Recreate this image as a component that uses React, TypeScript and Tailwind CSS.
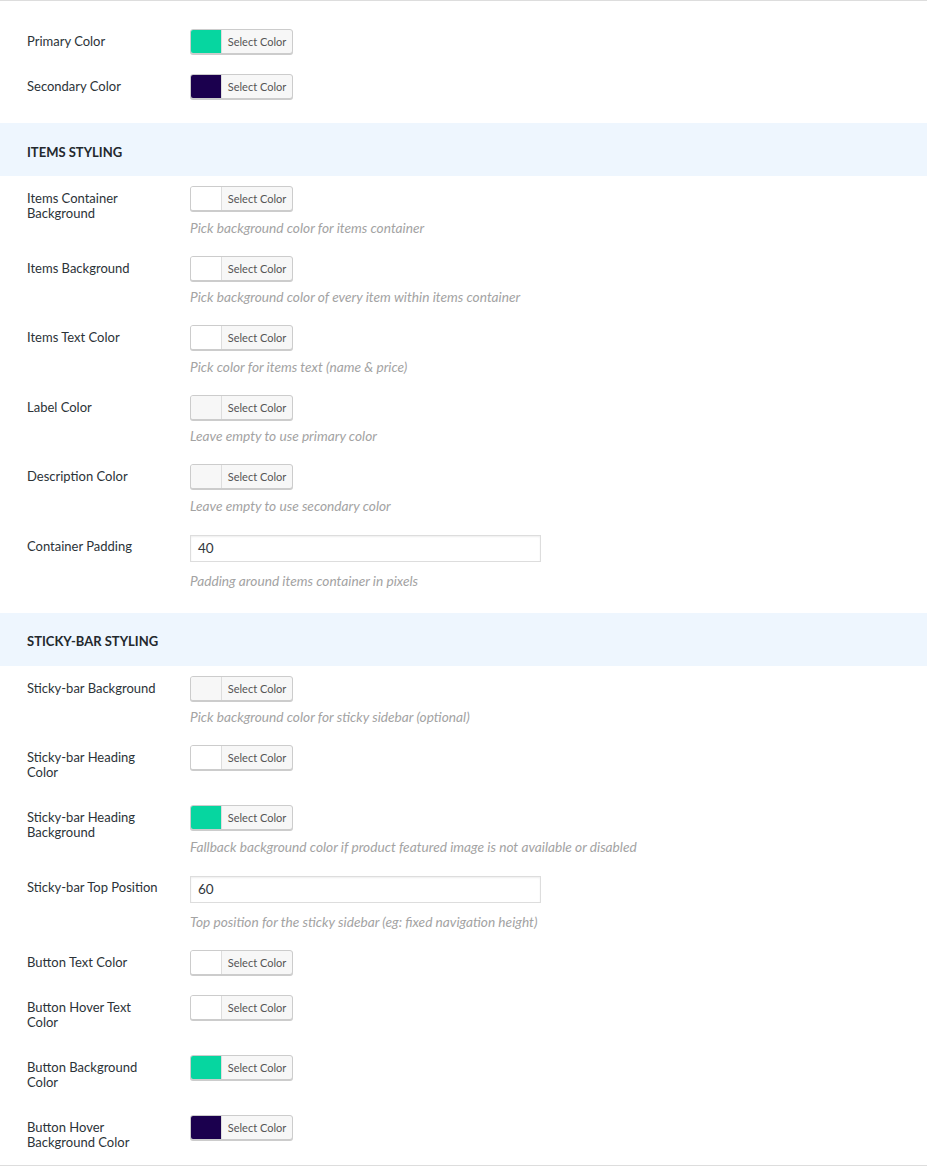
import React from "react";

type Row =
  | { kind: "color"; label: string[]; color: string; desc?: string }
  | { kind: "input"; label: string[]; value: string; desc?: string };

const EMPTY = "#f7f7f7";

const general: Row[] = [
  { kind: "color", label: ["Primary Color"], color: "#06d6a0" },
  { kind: "color", label: ["Secondary Color"], color: "#1b004e" },
];

const items: Row[] = [
  { kind: "color", label: ["Items Container", "Background"], color: "#ffffff", desc: "Pick background color for items container" },
  { kind: "color", label: ["Items Background"], color: "#ffffff", desc: "Pick background color of every item within items container" },
  { kind: "color", label: ["Items Text Color"], color: "#ffffff", desc: "Pick color for items text (name & price)" },
  { kind: "color", label: ["Label Color"], color: EMPTY, desc: "Leave empty to use primary color" },
  { kind: "color", label: ["Description Color"], color: EMPTY, desc: "Leave empty to use secondary color" },
  { kind: "input", label: ["Container Padding"], value: "40", desc: "Padding around items container in pixels" },
];

const sticky: Row[] = [
  { kind: "color", label: ["Sticky-bar Background"], color: EMPTY, desc: "Pick background color for sticky sidebar (optional)" },
  { kind: "color", label: ["Sticky-bar Heading", "Color"], color: "#ffffff" },
  { kind: "color", label: ["Sticky-bar Heading", "Background"], color: "#06d6a0", desc: "Fallback background color if product featured image is not available or disabled" },
  { kind: "input", label: ["Sticky-bar Top Position"], value: "60", desc: "Top position for the sticky sidebar (eg: fixed navigation height)" },
  { kind: "color", label: ["Button Text Color"], color: "#ffffff" },
  { kind: "color", label: ["Button Hover Text", "Color"], color: "#ffffff" },
  { kind: "color", label: ["Button Background", "Color"], color: "#06d6a0" },
  { kind: "color", label: ["Button Hover", "Background Color"], color: "#1b004e" },
];

function ColorButton({ color }: { color: string }) {
  return (
    <div className="flex h-[25px] w-[103px] overflow-hidden rounded-[3px] border border-[#cccccc] bg-[#f7f7f7] shadow-[0_1px_0_#cccccc]">
      <div className="w-[30px] shrink-0" style={{ backgroundColor: color }} />
      <div className="flex flex-1 items-center justify-center border-l border-[#dddddd] text-[11px] leading-none text-[#555555]">
        Select Color
      </div>
    </div>
  );
}

function FieldRow({ row }: { row: Row }) {
  const isColor = row.kind === "color";
  return (
    <div className="flex items-start">
      <div className="w-[190px] shrink-0 pl-[27px] pt-[15px] pb-[15px] text-[13px] leading-[15px] text-[#2c3338]">
        {row.label.map((l, i) => (
          <div key={i}>{l}</div>
        ))}
      </div>
      <div className={`flex flex-col ${isColor ? "pt-[10px]" : "pt-[11px]"} pb-[10px]`}>
        {row.kind === "color" ? (
          <ColorButton color={row.color} />
        ) : (
          <div className="flex h-[27px] w-[351px] items-center border border-[#dddddd] bg-white pl-[7px] text-[13.5px] text-[#32373c] shadow-[inset_0_1px_2px_rgba(0,0,0,0.07)]">
            {row.value}
          </div>
        )}
        {row.desc && (
          <div className={`${isColor ? "mt-[7.5px]" : "mt-[10px]"} text-[13.7px] italic leading-[17px] text-[#a3a3a3]`}>
            {row.desc}
          </div>
        )}
      </div>
    </div>
  );
}

function Header({ title }: { title: string }) {
  return (
    <div className="flex h-[53px] items-center bg-[#eef6fe] pl-[27px] pt-[6px] text-[13px] font-bold uppercase text-[#23282d]">
      {title}
    </div>
  );
}

export default function App() {
  return (
    <div className="min-h-[1167px] bg-white" style={{ fontFamily: "Lato, 'Open Sans', sans-serif" }}>
      <div className="border-t border-b border-[#dddddd]">
        <div className="pt-[18px] pb-[14px]">
          {general.map((r, i) => (
            <FieldRow key={i} row={r} />
          ))}
        </div>
        <Header title="Items Styling" />
        <div className="pb-[14px]">
          {items.map((r, i) => (
            <FieldRow key={i} row={r} />
          ))}
        </div>
        <Header title="Sticky-bar Styling" />
        <div>
          {sticky.map((r, i) => (
            <FieldRow key={i} row={r} />
          ))}
        </div>
      </div>
    </div>
  );
}
